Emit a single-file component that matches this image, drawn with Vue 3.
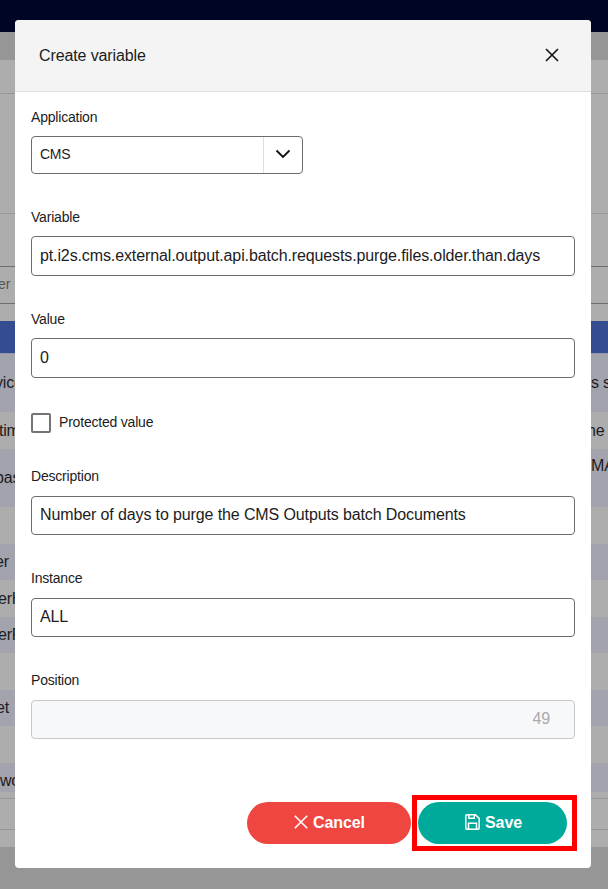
<script setup>
import { ref } from 'vue'

const form = ref({
  application: 'CMS',
  variable: 'pt.i2s.cms.external.output.api.batch.requests.purge.files.older.than.days',
  value: '0',
  description: 'Number of days to purge the CMS Outputs batch Documents',
  instance: 'ALL',
  position: '49'
})

const rows = [
  { h: 58, left: 'vice', lx: -5, right: 's s', rx: 0 },
  { h: 37, left: 'tim', lx: -1, right: 'he', rx: -4 },
  { h: 58, left: 'bas', lx: -5, right: 'MA', rx: 0, up: true },
  { h: 37 },
  { h: 36, left: 'er', lx: -5 },
  { h: 37, left: 'erH', lx: -2 },
  { h: 36, left: 'erP', lx: -2 },
  { h: 37 },
  { h: 36, left: 'et', lx: -4 },
  { h: 37 },
  { h: 29, left: 'wo', lx: 0, low: true }
]
</script>

<template>
  <div class="screen">
    <div class="page">
      <div class="nav"></div>
      <div class="crumbs"></div>
      <div class="toolbar"></div>
      <div class="panel"></div>
      <div class="space"></div>
      <div class="filter"><span>er</span></div>
      <div class="gap"></div>
      <div class="thead"></div>
      <div
        v-for="(r, i) in rows"
        :key="i"
        class="row"
        :class="{ odd: i % 2 === 0, up: r.up, low: r.low }"
        :style="{ height: r.h + 'px' }"
      >
        <span class="cell"><span :style="{ marginLeft: r.lx + 'px' }">{{ r.left }}</span></span>
        <span class="cell end"><span :style="{ marginLeft: r.rx + 'px' }">{{ r.right }}</span></span>
      </div>
      <div class="tail"></div>
      <div class="pager"></div>
      <div class="bottom"></div>
    </div>

    <div class="modal">
      <header class="head">
        <span>Create variable</span>
        <svg width="14" height="14" viewBox="0 0 14 14"><path d="M1 1L13 13M13 1L1 13" /></svg>
      </header>
      <div class="body">
        <div class="field">
          <label>Application</label>
          <div class="select">
            <span class="chosen">{{ form.application }}</span>
            <span class="arrow">
              <svg width="16" height="10" viewBox="0 0 16 10"><path d="M1.5 1.5L8 8L14.5 1.5" /></svg>
            </span>
          </div>
        </div>
        <div class="field variable">
          <label>Variable</label>
          <div class="input">{{ form.variable }}</div>
        </div>
        <div class="field value">
          <label>Value</label>
          <div class="input">{{ form.value }}</div>
        </div>
        <div class="check"><span class="box"></span><span>Protected value</span></div>
        <div class="field lower">
          <label>Description</label>
          <div class="input">{{ form.description }}</div>
        </div>
        <div class="field lower">
          <label>Instance</label>
          <div class="input">{{ form.instance }}</div>
        </div>
        <div class="field lower">
          <label>Position</label>
          <div class="input disabled">{{ form.position }}</div>
        </div>
      </div>
      <footer class="actions">
        <button class="btn cancel">
          <svg width="14" height="14" viewBox="0 0 14 14"><path d="M.8 .8L13.2 13.2M13.2 .8L.8 13.2" /></svg>
          <span>Cancel</span>
        </button>
        <div class="highlight">
          <button class="btn save">
            <svg width="15" height="16" viewBox="0 0 15 16">
              <path d="M2 .8H10.4L14.2 4.4V14Q14.2 15.2 13 15.2H2Q.8 15.2 .8 14V2Q.8 .8 2 .8ZM3.9 .8V4.3H9.3V.8M3.5 15V9.2H11.5V15" />
            </svg>
            <span>Save</span>
          </button>
        </div>
      </footer>
    </div>
  </div>
</template>

<style>
body { margin: 0; }
</style>

<style scoped>
* { box-sizing: border-box; }
.screen {
  position: relative;
  width: 608px;
  height: 889px;
  overflow: hidden;
  background: #969696;
  font-family: "Liberation Sans", Arial, sans-serif;
  font-size: 16px;
  letter-spacing: -0.118px;
  color: #1c1c22;
}
.page { display: flex; flex-direction: column; height: 889px; background: #adadad; }
.page > div { flex-shrink: 0; }
.nav { height: 32px; background: #000525; }
.crumbs { height: 28px; background: #969696; }
.toolbar { height: 34px; border-bottom: 1px solid #979797; }
.panel { height: 120px; border-bottom: 1px solid #979797; }
.space { height: 52px; }
.filter {
  height: 38px;
  border-top: 1px solid #6c6c6c;
  border-bottom: 1px solid #6c6c6c;
  line-height: 35px;
  font-size: 14px;
  color: #555;
}
.filter span { margin-left: -2px; }
.gap { height: 17px; }
.thead { height: 33px; background: #344c90; border-bottom: 1px solid #9196ad; }
.row { display: flex; justify-content: space-between; align-items: center; }
.row.odd { background: #a3a3ad; }
.cell { width: 15px; overflow: hidden; white-space: nowrap; line-height: 20px; letter-spacing: -0.2px; }
.cell span { display: inline-block; }
.cell.end { width: 17px; }
.row.up .end { align-self: flex-start; margin-top: 7px; }
.row.low .cell { padding-top: 6px; line-height: 20px; }
.tail { height: 7px; border-bottom: 1px solid #969696; }
.pager { height: 31px; border-bottom: 1px solid #969696; }
.bottom { height: 59px; border-top: 17px solid #adadad; background: #969696; }

.modal {
  position: absolute;
  left: 15px;
  top: 20px;
  width: 576px;
  height: 848px;
  border-radius: 4px;
  overflow: hidden;
  background: #fff;
  display: flex;
  flex-direction: column;
}
.head {
  height: 72px;
  flex-shrink: 0;
  background: #f4f4f4;
  border-bottom: 1px solid #dedede;
  padding: 0 32px 0 24px;
  display: flex;
  align-items: center;
  justify-content: space-between;
}
svg { fill: none; stroke: #111; stroke-width: 1.6; display: block; }
.head svg { margin-bottom: 2px; }
.body { padding: 15px 16px 0; }
.field label { display: block; height: 20px; line-height: 20px; font-size: 14px; letter-spacing: -0.2px; margin-bottom: 9px; }
.select {
  width: 272px;
  height: 38px;
  border: 1px solid #6c6c6c;
  border-radius: 4px;
  display: flex;
  font-size: 14px;
  letter-spacing: -0.3px;
}
.chosen { flex: 1; padding-left: 8px; line-height: 35px; }
.arrow { width: 39px; border-left: 1px solid #dedede; display: flex; align-items: center; justify-content: center; padding-bottom: 2px; }
.arrow svg { stroke-width: 1.8; }
.input {
  height: 40px;
  border: 1px solid #6c6c6c;
  border-radius: 4px;
  padding: 0 8px;
  line-height: 37px;
  white-space: nowrap;
}
.variable, .value { margin-top: 33px; }
.check { display: flex; gap: 8px; height: 20px; margin-top: 35px; font-size: 14px; line-height: 19px; letter-spacing: -0.2px; }
.box { width: 20px; height: 20px; border: 2px solid #747474; border-radius: 2px; }
.lower { margin-top: 33px; }
.lower label { margin-bottom: 10px; }
.lower .input { height: 39px; line-height: 35px; }
.lower .disabled { background: #f7f8fa; border-color: #c8c8c8; color: #a9abae; text-align: right; padding-right: 24px; }
.actions { display: flex; justify-content: flex-end; align-items: flex-start; padding: 56px 14px 0 0; }
.btn {
  height: 42px;
  border: 0;
  border-radius: 21px;
  padding: 0;
  color: #fff;
  font-family: inherit;
  font-size: 16px;
  font-weight: 700;
  letter-spacing: -0.1px;
  display: flex;
  align-items: center;
  justify-content: center;
  gap: 5px;
}
.btn svg { stroke: #fff; margin-top: -3px; }
.cancel { width: 164px; margin: 7px 1px 0 0; padding-left: 1px; background: #f04641; }
.save { width: 149px; padding-left: 2px; background: #00aa9b; }
.highlight { width: 165px; height: 56px; border: 5px solid #f00; padding: 2px 1px; }
.save svg { stroke-width: 1.5; }
</style>
